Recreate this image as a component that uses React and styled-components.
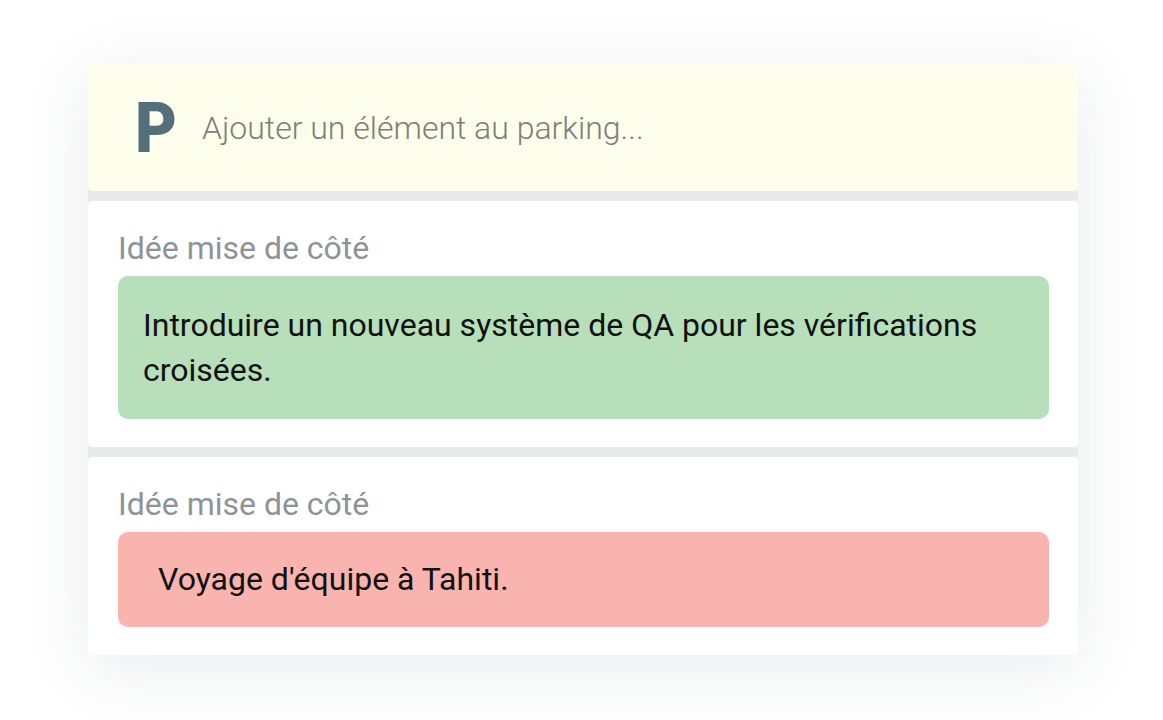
import React from "react";
import styled, { createGlobalStyle } from "styled-components";

const Global = createGlobalStyle`
  html, body { margin: 0; padding: 0; background: #ffffff; }
  body { font-family: Roboto, "Noto Sans", Arial, sans-serif; }
`;

const Page = styled.div`
  min-height: 720px;
  box-sizing: border-box;
  padding: 64px 0 0 88px;
`;

const Stack = styled.div`
  width: 990px;
  display: flex;
  flex-direction: column;
  gap: 10px;
  background: #e7e9eb;
  border-radius: 4px;
  box-shadow: 0 12px 70px rgba(40, 55, 80, 0.10);
`;

const Card = styled.div`
  background: ${(p) => p.$bg || "#ffffff"};
  border-radius: 4px;
`;

const Composer = styled(Card)`
  height: 127px;
  display: flex;
  align-items: center;
  padding-left: 47px;
  box-sizing: border-box;
`;

const ParkingMark = styled.span`
  display: inline-block;
  font-family: Roboto, Arial, sans-serif;
  font-weight: 900;
  font-size: 70px;
  line-height: 1;
  color: #546e7a;
  width: 40px;
  margin-right: 27px;
  transform: scaleX(0.92);
  transform-origin: left center;
`;

const Placeholder = styled.span`
  font-weight: 300;
  font-size: 32px;
  color: #7e7e78;
`;

const Item = styled(Card)`
  padding: 30px 29px 28px 30px;
`;

const Label = styled.div`
  font-size: 32px;
  line-height: 34px;
  color: #8f9398;
  margin-bottom: 11px;
`;

const Note = styled.div`
  background: ${(p) => p.$bg};
  border-radius: 10px;
  padding: ${(p) => p.$pad};
  font-size: 32px;
  line-height: 45px;
  color: #111;
`;

export default function App() {
  return (
    <>
      <Global />
      <Page>
        <Stack>
          <Composer $bg="#fefeec">
            <ParkingMark>P</ParkingMark>
            <Placeholder>Ajouter un élément au parking...</Placeholder>
          </Composer>
          <Item>
            <Label>Idée mise de côté</Label>
            <Note $bg="#b7dfb9" $pad="27px 60px 26px 25px">
              Introduire un nouveau système de QA pour les vérifications croisées.
            </Note>
          </Item>
          <Item>
            <Label>Idée mise de côté</Label>
            <Note $bg="#fab4b0" $pad="25px 40px 25px 40px">
              Voyage d'équipe à Tahiti.
            </Note>
          </Item>
        </Stack>
      </Page>
    </>
  );
}
